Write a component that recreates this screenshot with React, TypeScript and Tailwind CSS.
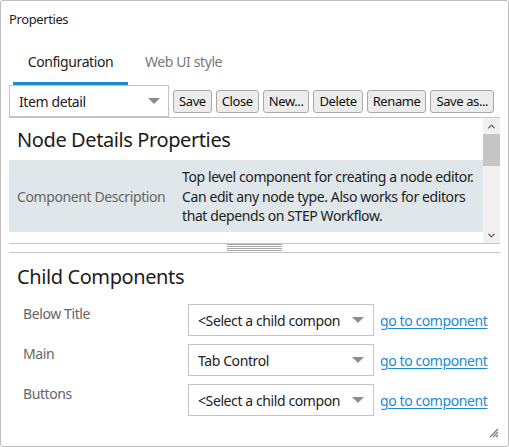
import { ChevronUp, ChevronDown } from "lucide-react";

const tools = ["Save", "Close", "New...", "Delete", "Rename", "Save as..."];

const rows = [
  { label: "Below Title", value: "<Select a child compon" },
  { label: "Main", value: "Tab Control" },
  { label: "Buttons", value: "<Select a child compon" },
];

function Caret() {
  return (
    <svg width="12" height="7" viewBox="0 0 12 7" className="shrink-0">
      <path d="M0 0h12L6 6z" fill="#8c8c8c" />
    </svg>
  );
}

export default function App() {
  return (
    <div className="relative h-[447px] w-[509px] rounded-[3px] border border-[#bdbdbd] bg-white font-['Segoe_UI','Noto_Sans',sans-serif] tracking-[-0.025em] text-[#222]">
      <div className="px-2 pt-[9px] text-[13px] leading-[18px]">Properties</div>

      {/* tabs */}
      <div className="ml-3 mt-[25px] flex text-[14px] leading-[18px]">
        <div className="w-[115px] border-b-[3px] border-[#1a8bd0] pb-[11px] text-center text-[#222]">
          Configuration
        </div>
        <div className="pl-[17px] text-[#777]">Web UI style</div>
      </div>

      <div className="mx-2 w-[491px]">
        {/* toolbar */}
        <div className="flex items-center gap-1 border-b border-[#c4c4c4]">
          <div className="flex h-[32px] w-[160px] items-center justify-between border border-[#c4c4c4] pl-[9px] pr-[8px] text-[14px]">
            <span>Item detail</span>
            <Caret />
          </div>
          {tools.map((t) => (
            <button
              key={t}
              className="h-[23px] whitespace-nowrap rounded-[3px] border border-[#a9a9a9] bg-[#ececec] px-[5px] text-[13px] leading-[18px] text-[#111]"
            >
              {t}
            </button>
          ))}
        </div>

        {/* scroll area */}
        <div className="flex h-[125px]">
          <div className="flex-1 overflow-hidden">
            <div className="px-2 pt-[9px] text-[20px] leading-[26px] text-[#1c1c1c]">
              Node Details Properties
            </div>
            <div className="mt-[7px] flex h-[72px] items-center bg-[#dfe7ea] pt-[1px] text-[14px]">
              <div className="w-[173px] pl-2 text-[#666]">Component Description</div>
              <div className="flex-1 pr-2 leading-[19.5px] text-[#222]">
                Top level component for creating a node editor. Can edit any node type. Also works for editors
                that depends on STEP Workflow.
              </div>
            </div>
          </div>
          <div className="flex w-[17px] flex-col bg-[#f0f0f0]">
            <div className="flex h-[16px] items-center justify-center">
              <ChevronUp size={11} strokeWidth={3} color="#606060" />
            </div>
            <div className="h-[32px] bg-[#c5c5c5]" />
            <div className="flex-1" />
            <div className="flex h-[16px] items-center justify-center">
              <ChevronDown size={11} strokeWidth={3} color="#606060" />
            </div>
          </div>
        </div>

        {/* splitter */}
        <div className="flex h-[10px] justify-center border-y border-[#c4c4c4]">
          <div className="flex w-[55px] flex-col gap-[1px]">
            <div className="h-[1px] bg-[#a8a8a8]" />
            <div className="h-[1px] bg-[#a8a8a8]" />
            <div className="h-[1px] bg-[#a8a8a8]" />
            <div className="h-[1px] bg-[#a8a8a8]" />
          </div>
        </div>

        <div className="px-2 pt-[11px] text-[20px] leading-[26px] text-[#1c1c1c]">Child Components</div>

        <div className="mt-[14px] flex flex-col gap-[8px]">
          {rows.map((r) => (
            <div key={r.label} className="flex items-start text-[14px]">
              <div className="w-[179px] pl-[14px] pt-[1px] leading-[18px] text-[#666]">{r.label}</div>
              <div className="flex h-[32px] w-[186px] items-center justify-between overflow-hidden border border-[#c4c4c4] pl-[9px] pr-[9px]">
                <span className="whitespace-nowrap">{r.value}</span>
                <Caret />
              </div>
              <a className="ml-[6px] mt-[6px] text-[#1a8bd0] underline underline-offset-2">go to component</a>
            </div>
          ))}
        </div>
      </div>

      {/* resize grip */}
      <svg className="absolute bottom-[8px] right-[9px]" width="12" height="12" viewBox="0 0 12 12">
        <path d="M11 3L3 11M11 6L6 11M11 9L9 11" stroke="#7a7a7a" strokeWidth="1.2" />
      </svg>
    </div>
  );
}
